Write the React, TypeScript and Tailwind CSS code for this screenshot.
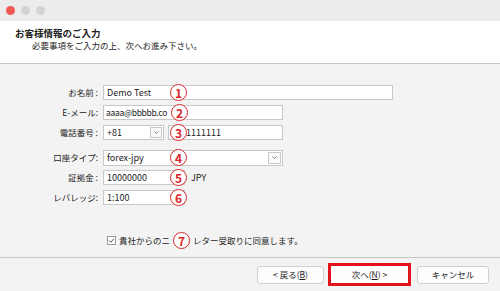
import React from 'react';

const Badge = ({ n, className = '' }: { n: number; className?: string }) => (
  <span
    className={`flex items-center justify-center w-[17px] h-[17px] rounded-full border-[1.5px] border-[#d9262b] bg-white text-[#d9262b] text-[12px] font-bold leading-none ${className}`}
  >
    {n}
  </span>
);

const Label = ({ children }: { children: React.ReactNode }) => (
  <div className="w-[100px] pr-[2px] text-right text-[8.5px] leading-[15px] whitespace-nowrap">{children}</div>
);

const Chevron = () => (
  <svg viewBox="0 0 10 10" className="w-[7px] h-[7px]">
    <path d="M2 3.5 L5 6.5 L8 3.5" stroke="#555" strokeWidth="1" fill="none" />
  </svg>
);

const App: React.FC = () => {
  return (
    <div className="w-[500px] h-[291px] flex flex-col bg-[#f3f3f3] text-[#1c1c1c] overflow-hidden font-['Noto_Sans_CJK_JP',sans-serif]">
      {/* title bar */}
      <div className="h-[21px] shrink-0 bg-[#ececec] flex items-center pl-[6px] gap-[6px]">
        <span className="w-[9px] h-[9px] rounded-full bg-[#ee5a52]" />
        <span className="w-[9px] h-[9px] rounded-full bg-[#d3d3d3]" />
        <span className="w-[9px] h-[9px] rounded-full bg-[#d3d3d3]" />
      </div>

      {/* header */}
      <div className="h-[43px] shrink-0 bg-white border-b border-[#c6c6c6] pl-[15px] pt-[6px]">
        <div className="text-[9.5px] font-bold leading-[12px]">お客様情報のご入力</div>
        <div className="pl-[17px] text-[8.5px] leading-[12px]">必要事項をご入力の上、次へお進み下さい。</div>
      </div>

      {/* form */}
      <div className="flex-1 flex flex-col pt-[21px]">
        <div className="relative flex items-center h-[15px]">
          <Label>お名前 :</Label>
          <div className="ml-[3px] w-[290px] h-[15px] border border-[#c8c8c8] bg-white px-[3px] text-[9px] leading-[13px]">Demo Test</div>
          <Badge n={1} className="absolute left-[170px] top-[-1px]" />
        </div>

        <div className="relative flex items-center h-[15px] mt-[5px]">
          <Label>E-メール:</Label>
          <div className="ml-[3px] w-[180px] h-[15px] border border-[#c8c8c8] bg-white pl-[2px] text-[8.5px] leading-[13px] whitespace-nowrap tracking-[-0.3px]">
            aaaa@bbbbb.co
          </div>
          <Badge n={2} className="absolute left-[171px] top-[-1px]" />
        </div>

        <div className="relative flex items-center h-[15px] mt-[5px]">
          <Label>電話番号 :</Label>
          <div className="ml-[3px] w-[61px] h-[15px] border border-[#c8c8c8] bg-white pl-[3px] pr-[1px] flex items-center justify-between text-[9px]">
            <span>+81</span>
            <span className="w-[12px] h-[11px] border border-[#c8c8c8] bg-[#fafafa] flex items-center justify-center">
              <Chevron />
            </span>
          </div>
          <div className="ml-[4px] w-[115px] h-[15px] border border-[#c8c8c8] bg-white pl-[17px] text-[9px] leading-[13px]">1111111</div>
          <Badge n={3} className="absolute left-[170px] top-[-1px]" />
        </div>

        <div className="relative flex items-center h-[15px] mt-[10px]">
          <Label>口座タイプ:</Label>
          <div className="ml-[3px] w-[180px] h-[16px] border border-[#c8c8c8] bg-white pl-[3px] pr-[1px] flex items-center justify-between text-[9px]">
            <span>forex-jpy</span>
            <span className="w-[13px] h-[12px] border border-[#c8c8c8] bg-[#fafafa] flex items-center justify-center">
              <Chevron />
            </span>
          </div>
          <Badge n={4} className="absolute left-[170px] top-[-1px]" />
        </div>

        <div className="relative flex items-center h-[15px] mt-[5px]">
          <Label>証拠金 :</Label>
          <div className="ml-[3px] w-[82px] h-[15px] border border-[#c8c8c8] bg-white px-[3px] text-[9px] leading-[13px]">10000000</div>
          <span className="ml-[6px] text-[9px]">JPY</span>
          <Badge n={5} className="absolute left-[170px] top-[-1px]" />
        </div>

        <div className="relative flex items-center h-[15px] mt-[5px]">
          <Label>レバレッジ:</Label>
          <div className="ml-[3px] w-[82px] h-[15px] border border-[#c8c8c8] bg-white px-[3px] text-[9px] leading-[13px]">1:100</div>
          <Badge n={6} className="absolute left-[170px] top-[-1px]" />
        </div>

        <div className="flex items-center h-[15px] mt-[28px] pl-[107px] text-[8.5px] whitespace-nowrap">
          <span className="w-[9px] h-[9px] border border-[#9a9a9a] bg-white flex items-center justify-center">
            <svg viewBox="0 0 10 10" className="w-[7px] h-[7px]">
              <path d="M1.5 5 L4 7.5 L8.5 2.5" stroke="#333" strokeWidth="1.2" fill="none" />
            </svg>
          </span>
          <span className="ml-[3px]">貴社からのニ</span>
          <Badge n={7} className="mx-[3px] w-[16px] h-[16px] text-[11.5px]" />
          <span>レター受取りに同意します。</span>
        </div>
      </div>

      {/* footer */}
      <div className="h-[34px] shrink-0 border-t border-[#c6c6c6] flex items-center justify-end pr-[11px] text-[8.5px]">
        <button className="w-[67px] h-[18px] border border-[#cfcfcf] rounded-[3px] bg-[#fdfdfd] leading-none">&lt; 戻る(<span className="underline">B</span>)</button>
        <button className="ml-[4px] w-[83px] h-[23px] border-[3px] border-[#e3111b] bg-[#fdfdfd] leading-none">次へ(<span className="underline">N</span>) &gt;</button>
        <button className="ml-[6px] w-[72px] h-[18px] border border-[#cfcfcf] rounded-[3px] bg-[#fdfdfd] leading-none">キャンセル</button>
      </div>
    </div>
  );
};

export default App;
